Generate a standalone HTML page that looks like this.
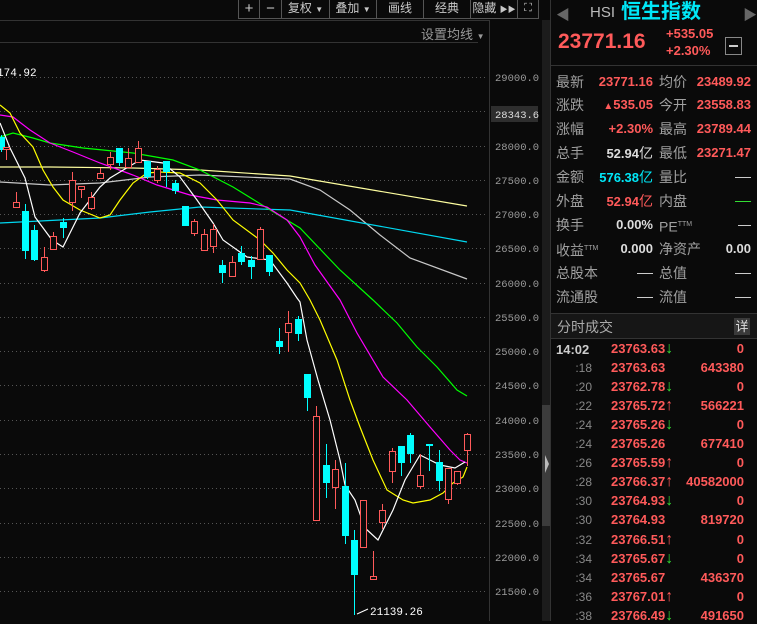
<!DOCTYPE html>
<html><head><meta charset="utf-8">
<style>
*{margin:0;padding:0;box-sizing:border-box}
body{width:757px;height:621px;background:#0a0a0a;overflow:hidden;position:relative;font-family:"Liberation Sans","Noto Sans CJK SC",sans-serif}
.a{position:absolute;white-space:nowrap}
.lb{position:absolute;color:#a0a0a0;font-size:14px;line-height:16px}
.v{position:absolute;font-size:13px;font-weight:bold;line-height:16px;text-align:right}
.r{color:#ff5a5a}
.tb{position:absolute;top:0;height:19px;border:1px solid #555;border-top:none;color:#c8c8c8;font-size:12px;line-height:17px;text-align:center}
.tm{position:absolute;left:556px;width:36px;text-align:right;color:#888;font-size:12px;line-height:14px}
.tp{position:absolute;left:611px;color:#ff5a5a;font-size:13px;font-weight:bold;line-height:14px}
.tp span,.ar{font-size:16px;line-height:14px;font-weight:bold}
.tv{position:absolute;right:13px;color:#ff5a5a;font-size:13px;font-weight:bold;line-height:14px;text-align:right}
.dn{color:#33dd33}
</style></head><body>
<svg class="a" style="left:0;top:0" width="551" height="621" viewBox="0 0 551 621">
<line x1="0" y1="20.5" x2="489" y2="20.5" stroke="#333"/>
<line x1="0" y1="42.5" x2="478" y2="42.5" stroke="#333"/>
<line x1="489.5" y1="20" x2="489.5" y2="621" stroke="#333"/>
<rect x="542" y="20" width="8" height="601" fill="#1c1c1c"/>
<rect x="542" y="405" width="8" height="121" fill="#3c3c3c"/>
<polygon points="545,455 549,464 545,473" fill="#bbb"/>
<g stroke="#555" stroke-dasharray="1,3">
<line x1="0" y1="77.5" x2="488" y2="77.5"/><line x1="0" y1="111.5" x2="488" y2="111.5"/><line x1="0" y1="146.5" x2="488" y2="146.5"/><line x1="0" y1="180.5" x2="488" y2="180.5"/><line x1="0" y1="214.5" x2="488" y2="214.5"/><line x1="0" y1="248.5" x2="488" y2="248.5"/><line x1="0" y1="283.5" x2="488" y2="283.5"/><line x1="0" y1="317.5" x2="488" y2="317.5"/><line x1="0" y1="351.5" x2="488" y2="351.5"/><line x1="0" y1="385.5" x2="488" y2="385.5"/><line x1="0" y1="420.5" x2="488" y2="420.5"/><line x1="0" y1="454.5" x2="488" y2="454.5"/><line x1="0" y1="488.5" x2="488" y2="488.5"/><line x1="0" y1="523.5" x2="488" y2="523.5"/><line x1="0" y1="557.5" x2="488" y2="557.5"/><line x1="0" y1="591.5" x2="488" y2="591.5"/>
</g>
<g font-family="Liberation Mono,monospace" font-size="10.5" fill="#9a9a9a">
<text x="495" y="81">29000.0</text><text x="495" y="150">28000.0</text><text x="495" y="184">27500.0</text><text x="495" y="218">27000.0</text><text x="495" y="252">26500.0</text><text x="495" y="287">26000.0</text><text x="495" y="321">25500.0</text><text x="495" y="355">25000.0</text><text x="495" y="389">24500.0</text><text x="495" y="424">24000.0</text><text x="495" y="458">23500.0</text><text x="495" y="492">23000.0</text><text x="495" y="527">22500.0</text><text x="495" y="561">22000.0</text><text x="495" y="595">21500.0</text>
</g>
<rect x="491" y="106" width="47" height="16" fill="#2e2e2e"/>
<text x="495" y="118" font-family="Liberation Mono,monospace" font-size="10.5" fill="#ddd">28343.6</text>
<text x="-3" y="76" font-family="Liberation Mono,monospace" font-size="11" fill="#fff">174.92</text>
<g fill="none" stroke-width="1.2">
<polyline stroke="#ffffa0" points="0,167 50,167 133,168 200,170 290,176 467,206"/>
<polyline stroke="#c8c8c8" points="0,182 50,185 100,183 150,177 200,175 290,179 320,190 350,210 380,235 410,258 467,279"/>
<polyline stroke="#00d8f0" points="0,223 100,218 150,212 200,207 290,210 467,242"/>
<polyline stroke="#00ff00" points="0,137 13,133 33,138 50,143 83,148 133,153 173,160 200,170 233,187 267,208 300,228 340,270 373,300 397,323 417,347 437,367 457,390 467,396"/>
<polyline stroke="#ff00ff" points="0,115 13,117 30,130 50,143 73,152 100,163 133,175 157,185 190,195 217,200 250,203 267,207 287,220 300,237 315,265 340,300 357,333 383,377 407,400 430,427 450,450 460,460 467,463"/>
<polyline stroke="#ffff00" points="0,105 10,113 20,133 33,147 43,170 53,187 63,200 80,210 100,218 110,215 120,200 133,183 147,173 160,172 180,173 200,183 217,200 233,220 260,240 273,253 287,270 300,283 310,300 320,320 337,360 350,400 360,427 373,460 387,490 403,500 413,503 430,500 443,493 453,483 463,477 467,467"/>
<polyline stroke="#ffffff" points="0,123 10,148 25,178 35,217 52,240 63,247 80,213 100,187 110,178 140,160 163,163 180,177 197,200 213,223 223,240 247,257 270,260 287,283 297,298 300,302 307,340 318,380 330,420 340,460 345,485 355,500 365,528 378,540 393,510 405,480 420,455 430,460 440,465 455,468 465,462"/>
</g>
<g id="c"></g>
<line x1="357" y1="614" x2="368" y2="609" stroke="#fff"/>
<text x="370" y="615" font-family="Liberation Mono,monospace" font-size="11" fill="#fff">21139.26</text>
</svg>
<script>
var d=[[1,137,150,135,152,0],[6,147,149,147,160,1],[16,202,207,192,207,1],[25,211,251,204,259,0],[34,230,260,225,261,0],[44,257,270,247,272,1],[53,236,249,232,249,1],[63,222,228,218,238,0],[72,180,202,172,211,1],[81,186,189,186,198,1],[91,197,208,192,210,1],[100,173,178,168,178,1],[110,157,164,152,170,1],[119,148,163,148,166,0],[128,158,167,148,167,1],[138,148,162,141,162,1],[147,161,177,161,179,0],[157,169,180,166,183,1],[166,161,172,161,187,0],[175,183,191,180,194,0],[185,206,226,206,226,0],[194,221,233,219,236,1],[204,234,250,229,250,1],[213,229,246,224,253,1],[222,265,273,260,283,0],[232,262,276,256,276,1],[241,253,262,246,265,0],[251,260,267,256,279,0],[260,229,259,227,259,1],[269,255,272,255,276,0],[279,341,347,328,354,0],[288,323,332,311,352,1],[298,319,334,316,341,0],[307,374,398,374,411,0],[316,416,520,406,520,1],[326,465,483,444,498,0],[335,469,487,460,509,1],[345,486,536,463,544,0],[354,540,575,530,615,0],[363,500,547,500,547,1],[373,576,579,551,579,1],[382,510,522,504,529,1],[392,451,471,448,483,1],[401,446,463,446,476,0],[410,435,454,433,463,0],[420,475,486,454,489,1],[429,444,446,444,471,0],[439,462,481,450,491,0],[448,468,499,468,504,1],[457,471,483,471,485,1],[467,434,450,433,466,1]];
var s='';d.forEach(function(e){var col=e[5]?'#ff5a5a':'#00ffff';s+='<line x1="'+(e[0]+.5)+'" y1="'+e[3]+'" x2="'+(e[0]+.5)+'" y2="'+e[4]+'" stroke="'+col+'"/>';if(e[5])s+='<rect x="'+(e[0]-2.5)+'" y="'+(e[1]+.5)+'" width="6" height="'+Math.max(e[2]-e[1],1)+'" fill="#0a0a0a" stroke="'+col+'"/>';else s+='<rect x="'+(e[0]-3)+'" y="'+e[1]+'" width="7" height="'+Math.max(e[2]-e[1],2)+'" fill="'+col+'"/>';});
document.getElementById('c').innerHTML=s;
</script>
<div class="tb" style="left:238px;width:22px;font-size:15px">+</div>
<div class="tb" style="left:259px;width:23px;font-size:15px">−</div>
<div class="tb" style="left:281px;width:49px">复权 <span style="font-size:8px">▼</span></div>
<div class="tb" style="left:329px;width:48px">叠加 <span style="font-size:8px">▼</span></div>
<div class="tb" style="left:376px;width:48px">画线</div>
<div class="tb" style="left:423px;width:48px">经典</div>
<div class="tb" style="left:470px;width:48px">隐藏 <span style="font-size:8px">▶▶</span></div>
<div class="tb" style="left:517px;width:22px;font-size:11px">⛶</div>
<div class="a" style="left:421px;top:24px;color:#999;font-size:13px">设置均线 <span style="font-size:8px">▼</span></div>
<div class="a" style="left:550px;top:0;width:1px;height:621px;background:#333"></div>
<div class="a" style="left:551px;top:65px;width:206px;height:1px;background:#333"></div>
<div class="a" style="left:551px;top:313px;width:206px;height:1px;background:#333"></div>
<div class="a" style="left:551px;top:314px;width:206px;height:25px;background:#161616;border-bottom:1px solid #333"></div>
<div class="a" style="left:556px;top:5px;color:#666;font-size:14px">◀</div>
<div class="a" style="left:743px;top:5px;color:#666;font-size:14px">▶</div>
<div class="a" style="left:590px;top:4px;color:#bbb;font-size:15px">HSI</div>
<div class="a" style="left:621px;top:0px;color:#00e8f8;font-size:20px;font-weight:bold;line-height:24px">恒生指数</div>
<div class="a" style="left:558px;top:30px;color:#ff5a5a;font-size:21px;font-weight:bold">23771.16</div>
<div class="a" style="left:666px;top:26px;color:#ff5a5a;font-size:13px;font-weight:bold">+535.05</div>
<div class="a" style="left:666px;top:43px;color:#ff5a5a;font-size:13px;font-weight:bold">+2.30%</div>
<div class="a" style="left:725px;top:37px;width:17px;height:18px;border:1px solid #888"><div style="position:absolute;left:3px;top:7px;width:9px;height:2px;background:#ccc"></div></div>

<div class="lb" style="left:556px;top:74px">最新</div><div class="v r" style="right:104px;top:74px">23771.16</div><div class="lb" style="left:659px;top:74px">均价</div><div class="v r" style="right:6px;top:74px">23489.92</div>
<div class="lb" style="left:556px;top:97px">涨跌</div><div class="v r" style="right:104px;top:97px"><span style="font-size:10px">▲</span>535.05</div><div class="lb" style="left:659px;top:97px">今开</div><div class="v r" style="right:6px;top:97px">23558.83</div>
<div class="lb" style="left:556px;top:121px">涨幅</div><div class="v r" style="right:104px;top:121px">+2.30%</div><div class="lb" style="left:659px;top:121px">最高</div><div class="v r" style="right:6px;top:121px">23789.44</div>
<div class="lb" style="left:556px;top:145px">总手</div><div class="v" style="right:104px;top:145px;color:#ddd">52.94<span style="font-weight:normal;font-size:14px">亿</span></div><div class="lb" style="left:659px;top:145px">最低</div><div class="v r" style="right:6px;top:145px">23271.47</div>
<div class="lb" style="left:556px;top:169px">金额</div><div class="v" style="right:104px;top:169px;color:#00e8f8">576.38<span style="font-weight:normal;font-size:14px">亿</span></div><div class="lb" style="left:659px;top:169px">量比</div><div class="a" style="left:735px;top:177px;width:16px;height:1px;background:#ccc"></div>
<div class="lb" style="left:556px;top:193px">外盘</div><div class="v r" style="right:104px;top:193px">52.94<span style="font-weight:normal;font-size:14px">亿</span></div><div class="lb" style="left:659px;top:193px">内盘</div><div class="a" style="left:735px;top:201px;width:16px;height:1px;background:#33dd33"></div>
<div class="lb" style="left:556px;top:217px">换手</div><div class="v" style="right:104px;top:217px;color:#ddd">0.00%</div><div class="lb" style="left:659px;top:217px">PE<sup style="font-size:7px">TTM</sup></div><div class="a" style="left:738px;top:225px;width:13px;height:1px;background:#ccc"></div>
<div class="lb" style="left:556px;top:241px">收益<sup style="font-size:7px">TTM</sup></div><div class="v" style="right:104px;top:241px;color:#ddd">0.000</div><div class="lb" style="left:659px;top:241px">净资产</div><div class="v" style="right:6px;top:241px;color:#ddd">0.00</div>
<div class="lb" style="left:556px;top:265px">总股本</div><div class="a" style="left:637px;top:273px;width:16px;height:1px;background:#ccc"></div><div class="lb" style="left:659px;top:265px">总值</div><div class="a" style="left:735px;top:273px;width:16px;height:1px;background:#ccc"></div>
<div class="lb" style="left:556px;top:289px">流通股</div><div class="a" style="left:637px;top:297px;width:16px;height:1px;background:#ccc"></div><div class="lb" style="left:659px;top:289px">流值</div><div class="a" style="left:735px;top:297px;width:16px;height:1px;background:#ccc"></div>

<div class="lb" style="left:557px;top:319px;color:#aaa">分时成交</div>
<div class="a" style="left:734px;top:318px;width:16px;height:17px;background:#3a3a3a;color:#ddd;font-size:13px;line-height:17px;text-align:center">详</div>

<div class="a" style="left:556px;top:342px;color:#ccc;font-size:13px;font-weight:bold">14:02</div>
<div class="tp" style="top:342px">23763.63<span class="dn">↓</span></div><div class="tv" style="top:342px">0</div>
<div class="tm" style="top:361px">:18</div><div class="tp" style="top:361px">23763.63</div><div class="tv" style="top:361px">643380</div>
<div class="tm" style="top:380px">:20</div><div class="tp" style="top:380px">23762.78<span class="dn">↓</span></div><div class="tv" style="top:380px">0</div>
<div class="tm" style="top:399px">:22</div><div class="tp" style="top:399px">23765.72<span>↑</span></div><div class="tv" style="top:399px">566221</div>
<div class="tm" style="top:418px">:24</div><div class="tp" style="top:418px">23765.26<span class="dn">↓</span></div><div class="tv" style="top:418px">0</div>
<div class="tm" style="top:437px">:24</div><div class="tp" style="top:437px">23765.26</div><div class="tv" style="top:437px">677410</div>
<div class="tm" style="top:456px">:26</div><div class="tp" style="top:456px">23765.59<span>↑</span></div><div class="tv" style="top:456px">0</div>
<div class="tm" style="top:475px">:28</div><div class="tp" style="top:475px">23766.37<span>↑</span></div><div class="tv" style="top:475px">40582000</div>
<div class="tm" style="top:494px">:30</div><div class="tp" style="top:494px">23764.93<span class="dn">↓</span></div><div class="tv" style="top:494px">0</div>
<div class="tm" style="top:513px">:30</div><div class="tp" style="top:513px">23764.93</div><div class="tv" style="top:513px">819720</div>
<div class="tm" style="top:533px">:32</div><div class="tp" style="top:533px">23766.51<span>↑</span></div><div class="tv" style="top:533px">0</div>
<div class="tm" style="top:552px">:34</div><div class="tp" style="top:552px">23765.67<span class="dn">↓</span></div><div class="tv" style="top:552px">0</div>
<div class="tm" style="top:571px">:34</div><div class="tp" style="top:571px">23765.67</div><div class="tv" style="top:571px">436370</div>
<div class="tm" style="top:590px">:36</div><div class="tp" style="top:590px">23767.01<span>↑</span></div><div class="tv" style="top:590px">0</div>
<div class="tm" style="top:609px">:38</div><div class="tp" style="top:609px">23766.49<span class="dn">↓</span></div><div class="tv" style="top:609px">491650</div>
</body></html>
